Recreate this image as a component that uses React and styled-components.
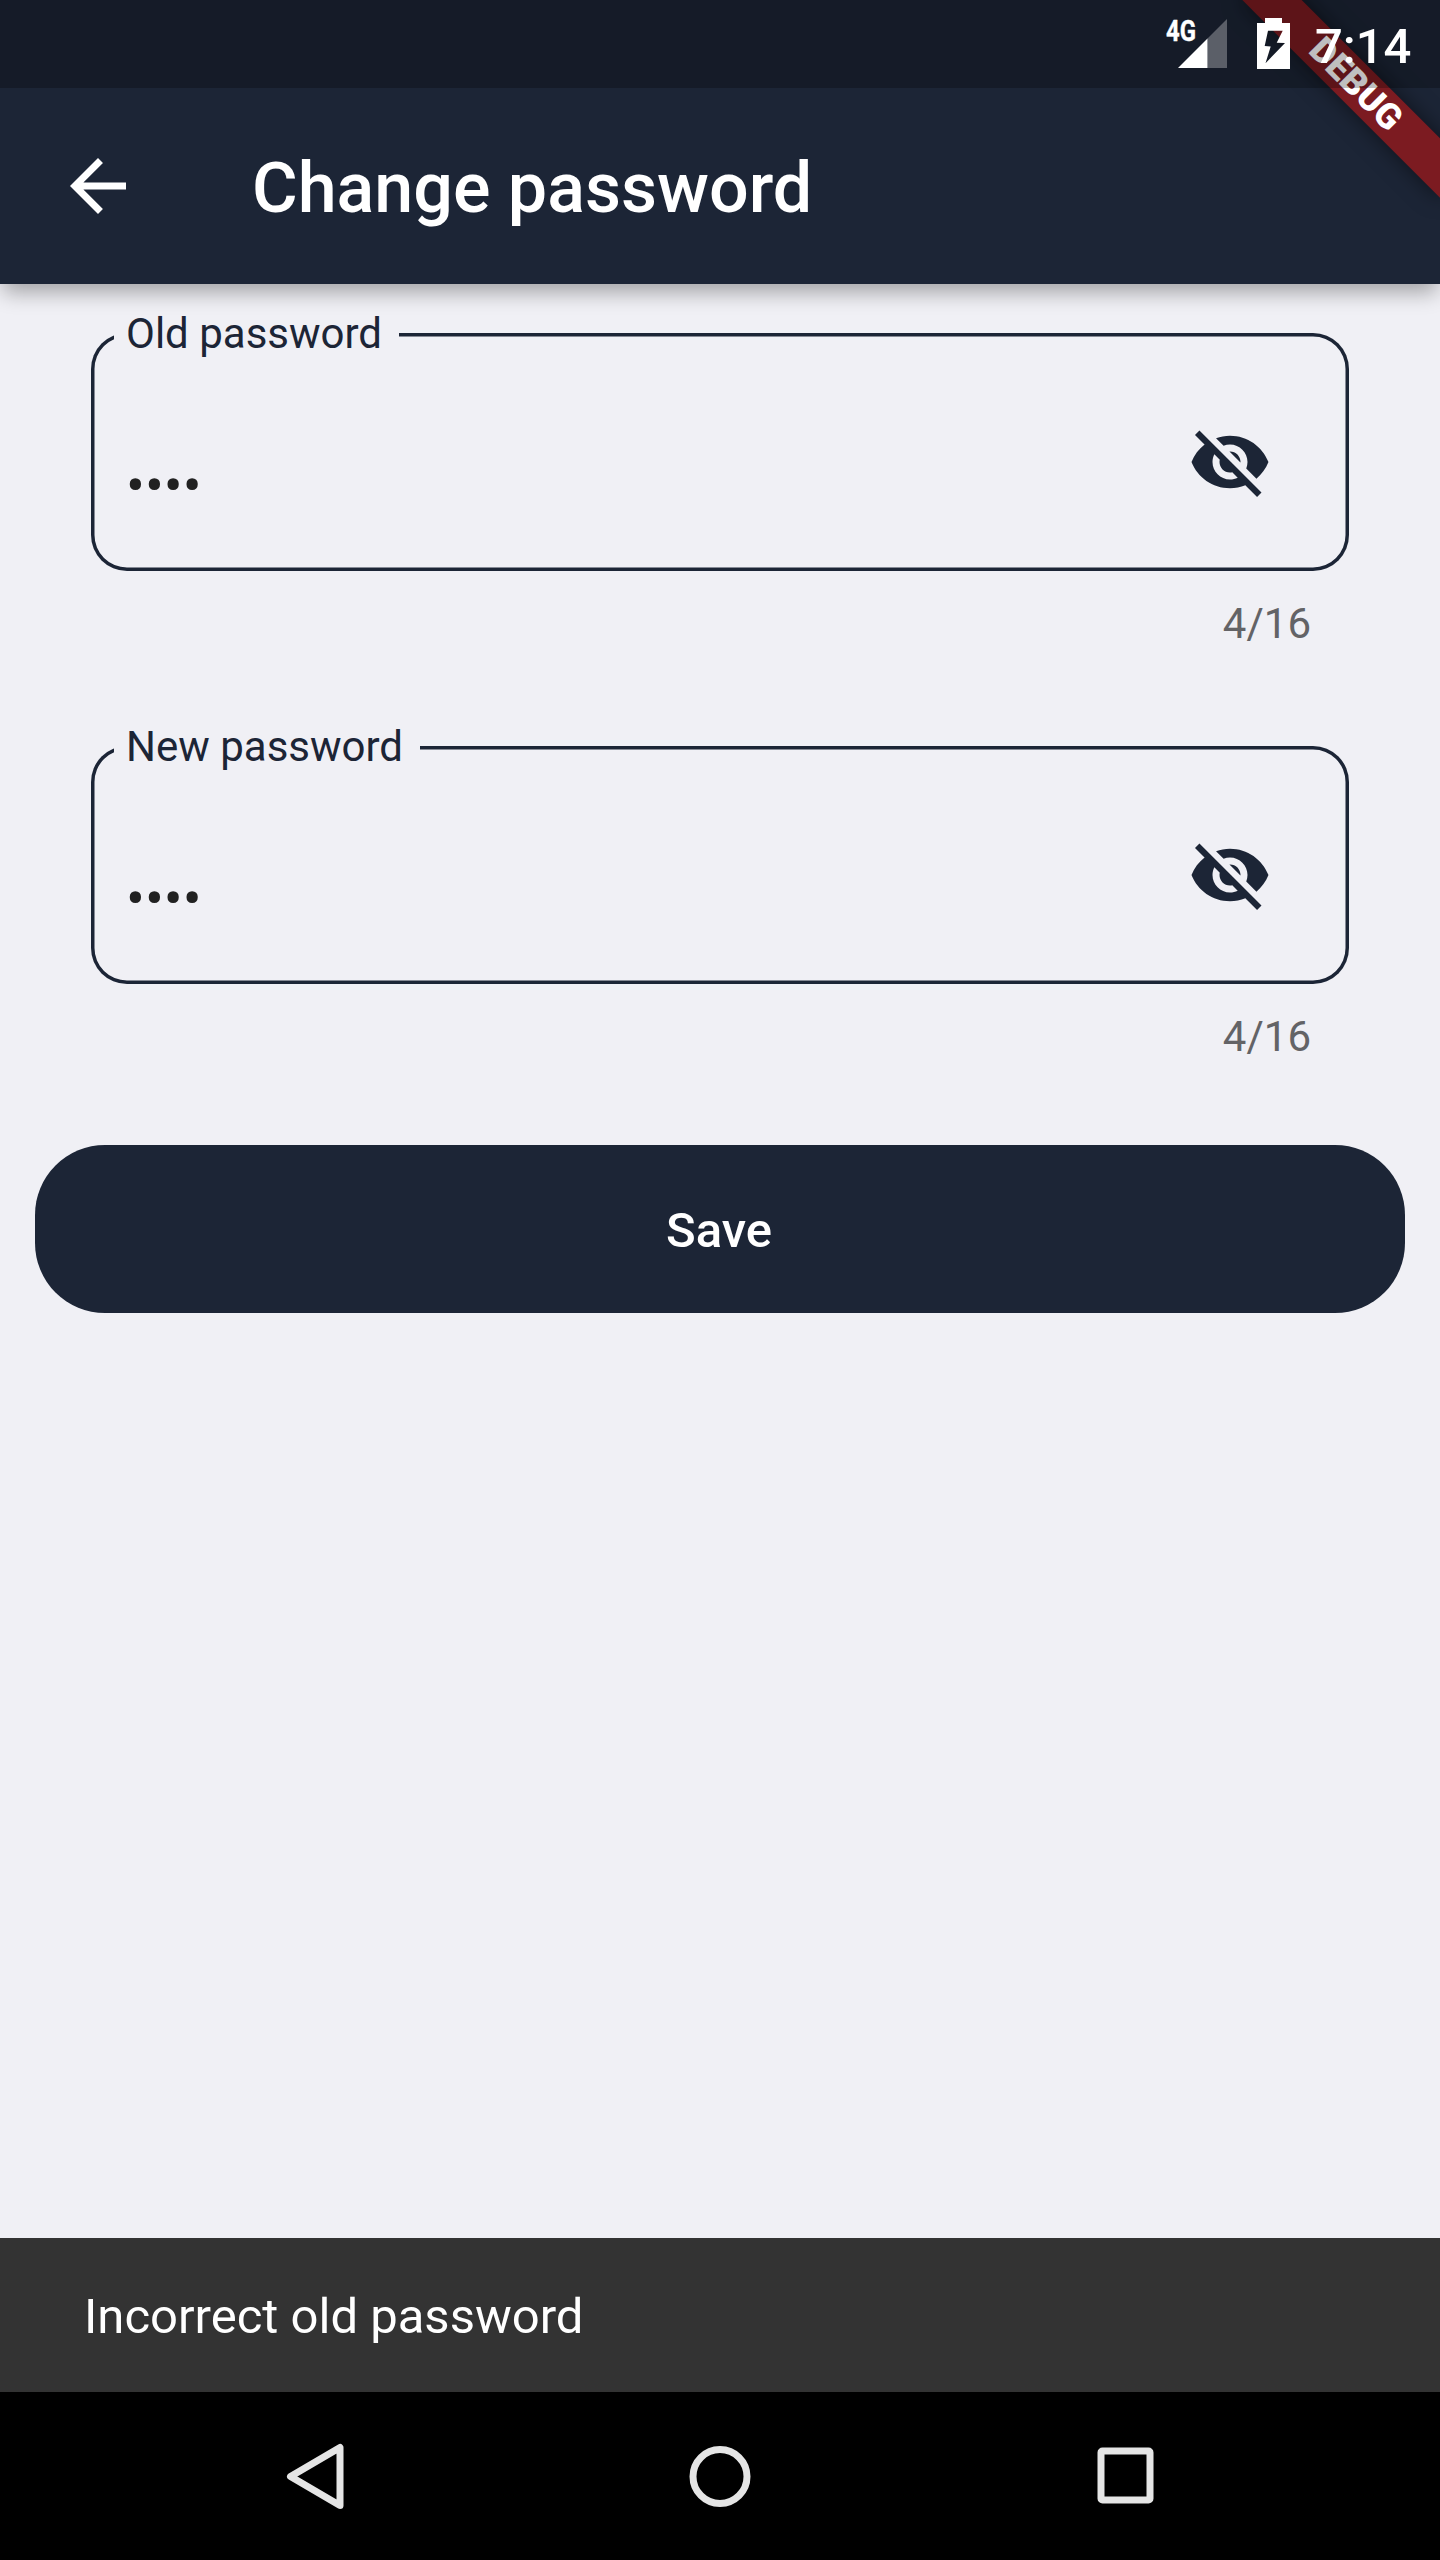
import React from 'react';
import styled, { createGlobalStyle } from 'styled-components';

const NAVY = '#1c2536';
const PAPER = '#f0f0f5';

const GlobalStyle = createGlobalStyle`
  *, *::before, *::after { box-sizing: border-box; }
  body {
    margin: 0;
    background: ${PAPER};
    font-family: Roboto, "Noto Sans", sans-serif;
  }
`;

const Screen = styled.div`
  display: flex;
  flex-direction: column;
  position: relative;
  width: 1440px;
  height: 2560px;
  overflow: hidden;
  background: ${PAPER};
`;

const Header = styled.header`
  position: relative;
  flex: none;
  background: ${NAVY};
  box-shadow: 0 11px 20px -3px rgba(0, 0, 0, 0.33);
`;

const StatusBar = styled.div`
  position: relative;
  z-index: 2;
  display: flex;
  align-items: flex-start;
  justify-content: flex-end;
  height: 88px;
  padding-right: 27px;
  background: rgba(0, 0, 0, 0.25);
  color: #fff;
`;

const Signal = styled.div`
  position: relative;
  width: 49px;
  height: 49px;
  margin: 19px 30px 0 0;
  svg { display: block; }
`;

const NetworkType = styled.span`
  position: absolute;
  right: 31px;
  top: 0;
  font-size: 29.5px;
  line-height: 24px;
  font-weight: 700;
  -webkit-text-stroke: 0.4px #fff;
  transform: scaleX(0.81);
  transform-origin: right center;
`;

const Battery = styled.svg`
  display: block;
  margin: 18px 25px 0 0;
`;

const Clock = styled.time`
  width: 98px;
  padding-top: 3px;
  font-size: 49px;
  line-height: 88px;
  font-weight: 500;
`;

const BannerClip = styled.div`
  position: absolute;
  z-index: 1;
  top: 0;
  right: 0;
  width: 300px;
  height: 284px;
  overflow: hidden;
  pointer-events: none;
`;

const Banner = styled.div`
  position: absolute;
  top: 63px;
  right: -56px;
  width: 280px;
  height: 42px;
  transform: rotate(45deg);
  background: #7c1b21;
  box-shadow: 0 0 21px rgba(0, 0, 0, 0.5);
  color: #fff;
  font-size: 35.7px;
  line-height: 42px;
  font-weight: 900;
  text-align: center;
`;

const AppBar = styled.div`
  display: flex;
  align-items: center;
  height: 196px;
  padding-left: 56px;
  color: #fff;
`;

const IconButton = styled.button`
  display: block;
  flex: none;
  width: 84px;
  height: 84px;
  padding: 0;
  border: 0;
  background: none;
  color: inherit;
  svg { display: block; }
`;

const Title = styled.h1`
  margin: 0 0 0 112px;
  padding-top: 4px;
  font-size: 70px;
  line-height: 82px;
  font-weight: 500;
  white-space: nowrap;
`;

const Form = styled.form`
  display: flex;
  flex: 1;
  flex-direction: column;
  padding: 49px 35px 0;
`;

const Field = styled.div`
  margin: 0 56px ${(p) => p.$gap}px;
`;

const Outline = styled.div`
  position: relative;
  display: flex;
  align-items: center;
  justify-content: space-between;
  height: 238px;
  padding: 20px 77px 0 35px;
  border-radius: 36px;
  box-shadow: inset 0 0 0 3.5px ${NAVY};
  color: ${NAVY};
`;

const Label = styled.label`
  position: absolute;
  left: 23px;
  top: -20px;
  padding: 0 17px 0 12px;
  background: linear-gradient(${PAPER}, ${PAPER}) 0 20px / 100% 10px no-repeat;
  font-size: 42px;
  line-height: 42px;
  white-space: nowrap;
`;

const Value = styled.span`
  padding-top: 48px;
  color: #212121;
  font-size: 56px;
  line-height: 66px;
`;

const Counter = styled.div`
  margin: 32px 38px 0 0;
  color: #636366;
  font-size: 42px;
  line-height: 42px;
  text-align: right;
`;

const SaveButton = styled.button`
  height: 168px;
  padding: 4px 2px 0 0;
  border: 0;
  border-radius: 70px;
  background: ${NAVY};
  color: #fff;
  font: 500 49px/58px Roboto, "Noto Sans", sans-serif;
`;

const Snackbar = styled.div`
  flex: none;
  height: 154px;
  padding: 3px 84px 0;
  background: #333;
  color: #fff;
  font-size: 49px;
  line-height: 152px;
`;

const NavBar = styled.nav`
  display: grid;
  flex: none;
  grid-template-columns: repeat(3, 405px);
  align-items: center;
  justify-content: center;
  justify-items: center;
  height: 168px;
  background: #000;
`;

const NavIcon = styled.svg`
  display: block;
  fill: none;
  stroke: #e5e5e5;
  stroke-width: 7;
  stroke-linejoin: round;
`;

function EyeOff() {
  return (
    <svg width="84" height="84" viewBox="0 0 24 24" fill="currentColor">
      <path d="M12 7c2.76 0 5 2.24 5 5 0 .65-.13 1.26-.36 1.83l2.92 2.92c1.51-1.26 2.7-2.89 3.43-4.75-1.73-4.39-6-7.5-11-7.5-1.4 0-2.74.25-3.98.7l2.16 2.16C10.74 7.13 11.35 7 12 7zM2 4.27l2.28 2.28.46.46C3.08 8.3 1.78 10.02 1 12c1.73 4.39 6 7.5 11 7.5 1.55 0 3.03-.3 4.38-.84l.42.42L19.73 22 21 20.73 3.27 3 2 4.27zM7.53 9.8l1.55 1.55c-.05.21-.08.43-.08.65 0 1.66 1.34 3 3 3 .22 0 .44-.03.65-.08l1.55 1.55c-.67.33-1.41.53-2.2.53-2.76 0-5-2.24-5-5 0-.79.2-1.53.53-2.2zm4.31-.78l3.15 3.15.02-.16c0-1.66-1.34-3-3-3l-.17.01z" />
    </svg>
  );
}

function PasswordField({ label, gap }) {
  return (
    <Field $gap={gap}>
      <Outline>
        <Label>{label}</Label>
        <Value>••••</Value>
        <IconButton type="button" aria-label="Show password">
          <EyeOff />
        </IconButton>
      </Outline>
      <Counter>4/16</Counter>
    </Field>
  );
}

export default function App() {
  return (
    <>
      <GlobalStyle />
      <Screen>
        <Header>
          <BannerClip>
            <Banner>DEBUG</Banner>
          </BannerClip>
          <StatusBar>
            <Signal>
              <NetworkType>4G</NetworkType>
              <svg width="49" height="49" viewBox="0 0 49 49">
                <path d="M49 0v49H29.5V19.5z" fill="#fff" fillOpacity="0.3" />
                <path d="M0 49h29.5V19.5z" fill="#fff" />
              </svg>
            </Signal>
            <Battery width="33" height="51" viewBox="0 0 33 51">
              <path
                fill="#fff"
                fillRule="evenodd"
                d="M8 0h17v5h8v46H0V5h8zM11 12.7h14.7l-6 12L28 25 8.5 45.3l5.2-16.8-6-.5z"
              />
            </Battery>
            <Clock>7:14</Clock>
          </StatusBar>
          <AppBar>
            <IconButton aria-label="Back">
              <svg width="84" height="84" viewBox="0 0 24 24" fill="currentColor">
                <path d="M20 11H7.83l5.59-5.59L12 4l-8 8 8 8 1.41-1.41L7.83 13H20v-2z" />
              </svg>
            </IconButton>
            <Title>Change password</Title>
          </AppBar>
        </Header>
        <Form>
          <PasswordField label="Old password" gap={101} />
          <PasswordField label="New password" gap={87} />
          <SaveButton type="button">Save</SaveButton>
        </Form>
        <Snackbar>Incorrect old password</Snackbar>
        <NavBar>
          <NavIcon width="58" height="68" viewBox="0 0 58 68">
            <path d="M54 5.500v58L4.500 34.500z" />
          </NavIcon>
          <NavIcon width="62" height="62" viewBox="0 0 62 62">
            <circle cx="31" cy="31.500" r="27" />
          </NavIcon>
          <NavIcon width="57" height="58" viewBox="0 0 57 58">
            <rect x="4" y="4" width="49" height="49" rx="1.500" />
          </NavIcon>
        </NavBar>
      </Screen>
    </>
  );
}
